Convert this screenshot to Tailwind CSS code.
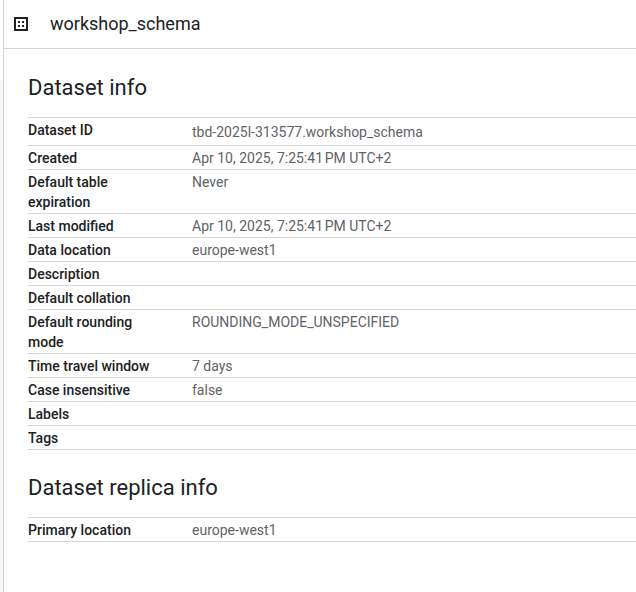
<!DOCTYPE html>
<html lang="en">
<head>
<meta charset="utf-8">
<meta name="viewport" content="width=device-width, initial-scale=1">
<title>workshop_schema</title>
<script src="https://cdn.jsdelivr.net/npm/@tailwindcss/browser@4"></script>
</head>
<body class="flex min-h-screen bg-white font-['Roboto',sans-serif] text-sm leading-5 text-[#202124]">
<div class="flex w-1 shrink-0 flex-col border-r border-[#d2d4d9] pt-20">
  <div class="grow bg-[#f6f7fa]"></div>
</div>
<div class="min-w-0 grow">
  <header class="flex h-[49px] items-center gap-5 border-b border-[#d5d6da] pl-2">
    <svg class="size-[18px]" viewBox="0 0 18 18" fill="#202124" shape-rendering="crispEdges" aria-hidden="true">
      <path fill-rule="evenodd" d="M2 2h14v14H2zM4 4v10h10V4z"/>
      <path d="M6 6h2v2H6zM10 6h2v2h-2zM6 10h2v2H6zM10 10h2v2h-2z"/>
    </svg>
    <h1 class="text-lg leading-6">workshop_schema</h1>
  </header>
  <main class="pl-6 pt-px">
    <section class="pt-6">
      <h2 class="mb-[15px] text-[22px] leading-7">Dataset info</h2>
      <table class="w-full table-fixed border-separate border-spacing-0 border-t border-[#d5d6d8] text-left [&_td]:border-b [&_td]:border-[#d5d6d8] [&_td]:pt-0.5 [&_td]:pb-px [&_td]:align-top [&_td]:text-[#5f6368] [&_th]:w-[164px] [&_th]:border-b [&_th]:border-[#d5d6d8] [&_th]:pt-0.5 [&_th]:pr-8 [&_th]:pb-px [&_th]:align-top [&_th]:font-medium">
        <tbody>
          <tr class="h-7"><th scope="row">Dataset ID</th><td><div class="pt-0.5">tbd-2025l-313577.workshop_schema</div></td></tr>
          <tr><th scope="row">Created</th><td>Apr 10, 2025, 7:25:41&#x202F;PM UTC+2</td></tr>
          <tr><th scope="row">Default table expiration</th><td>Never</td></tr>
          <tr><th scope="row">Last modified</th><td>Apr 10, 2025, 7:25:41&#x202F;PM UTC+2</td></tr>
          <tr><th scope="row">Data location</th><td>europe-west1</td></tr>
          <tr><th scope="row">Description</th><td></td></tr>
          <tr><th scope="row">Default collation</th><td></td></tr>
          <tr><th scope="row">Default rounding mode</th><td>ROUNDING_MODE_UNSPECIFIED</td></tr>
          <tr><th scope="row">Time travel window</th><td>7 days</td></tr>
          <tr><th scope="row">Case insensitive</th><td>false</td></tr>
          <tr><th scope="row">Labels</th><td></td></tr>
          <tr><th scope="row">Tags</th><td></td></tr>
        </tbody>
      </table>
    </section>
    <section class="pt-6">
      <h2 class="mb-[15px] text-[22px] leading-7">Dataset replica info</h2>
      <table class="w-full table-fixed border-separate border-spacing-0 border-t border-[#d5d6d8] text-left [&_td]:border-b [&_td]:border-[#d5d6d8] [&_td]:pt-0.5 [&_td]:pb-px [&_td]:align-top [&_td]:text-[#5f6368] [&_th]:w-[164px] [&_th]:border-b [&_th]:border-[#d5d6d8] [&_th]:pt-0.5 [&_th]:pr-8 [&_th]:pb-px [&_th]:align-top [&_th]:font-medium">
        <tbody>
          <tr><th scope="row">Primary location</th><td>europe-west1</td></tr>
        </tbody>
      </table>
    </section>
  </main>
</div>
</body>
</html>
